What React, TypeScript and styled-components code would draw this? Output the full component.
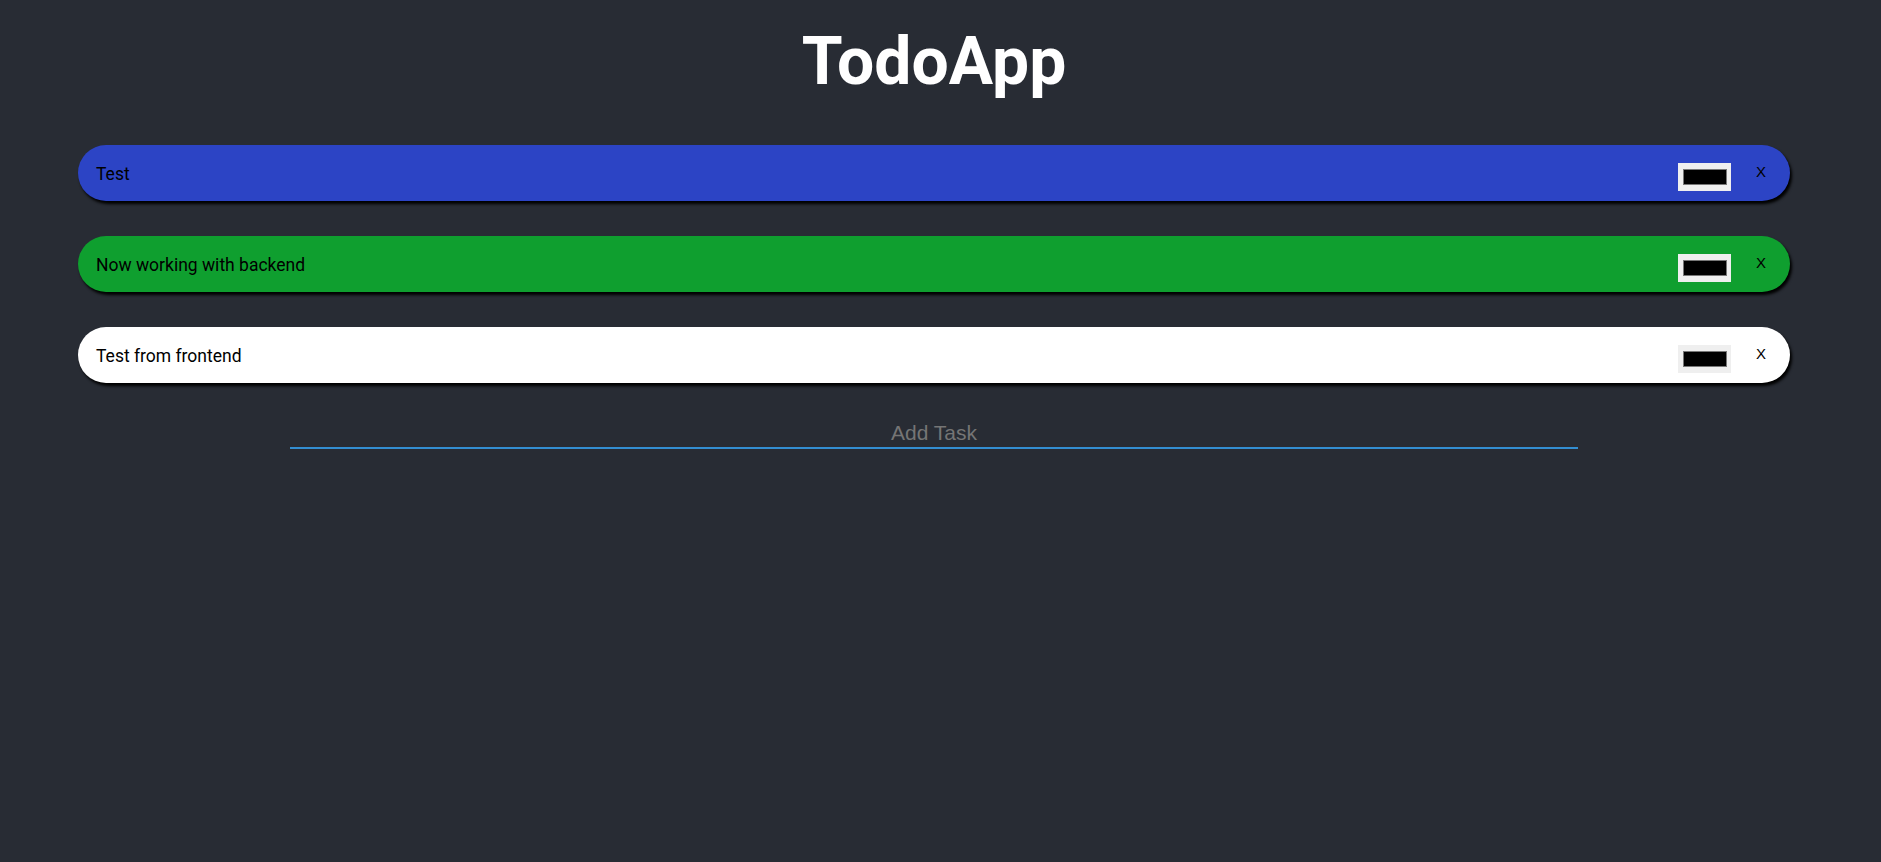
import React, { useState } from "react";
import styled, { createGlobalStyle } from "styled-components";

const GlobalStyle = createGlobalStyle`
  html, body {
    margin: 0;
    padding: 0;
    background: #282c34;
  }
  body {
    font-family: Roboto, "Noto Sans", sans-serif;
  }
`;

const Page = styled.div`
  width: 1868px;
  display: flex;
  flex-direction: column;
  align-items: center;
`;

const Title = styled.h1`
  margin: 22px 0 0;
  height: 80px;
  line-height: 80px;
  font-family: Roboto, sans-serif;
  font-weight: 700;
  font-size: 66px;
  color: #ffffff;
`;

const List = styled.ul`
  list-style: none;
  margin: 43px 0 0;
  padding: 0;
  width: 1712px;
  display: flex;
  flex-direction: column;
  gap: 35px;
`;

const Row = styled.li<{ $bg: string }>`
  height: 56px;
  box-sizing: border-box;
  padding: 0 18px 0 18px;
  display: flex;
  align-items: center;
  background: ${(p) => p.$bg};
  border-radius: 28px;
  box-shadow: 2px 3px 3px #000;
`;

const Label = styled.span`
  flex: 1;
  padding-top: 2px;
  font-family: Roboto, sans-serif;
  font-size: 17.5px;
  color: #000;
`;

const ColorPick = styled.input`
  width: 53px;
  height: 28px;
  box-sizing: border-box;
  margin: 7px 0 0;
  border: none;
  background: #efefef;
  padding: 6px 4px 6px 5px;
  cursor: pointer;
  &::-webkit-color-swatch-wrapper {
    padding: 0;
  }
  &::-webkit-color-swatch {
    border: 1px solid #777;
    border-radius: 0;
  }
`;

const RemoveButton = styled.button`
  margin-left: 19px;
  margin-top: -3px;
  padding: 0 6px;
  border: none;
  background: transparent;
  font-family: "Liberation Sans", Arial, sans-serif;
  font-size: 15px;
  color: #000;
  cursor: pointer;
`;

const AddInput = styled.input`
  margin-top: 32px;
  width: 1288px;
  height: 34px;
  box-sizing: border-box;
  border: none;
  border-bottom: 2px solid #338ed1;
  background: transparent;
  outline: none;
  text-align: center;
  font-family: "Liberation Sans", Arial, sans-serif;
  font-size: 21px;
  color: #ddd;
  padding: 4px 0 0;
  &::placeholder {
    color: #757575;
  }
`;

type Todo = { id: number; text: string; bg: string };

export default function App() {
  const [todos, setTodos] = useState<Todo[]>([
    { id: 1, text: "Test", bg: "#2c44c5" },
    { id: 2, text: "Now working with backend", bg: "#0f9f2f" },
    { id: 3, text: "Test from frontend", bg: "#ffffff" },
  ]);
  const [value, setValue] = useState("");

  return (
    <Page>
      <GlobalStyle />
      <Title>TodoApp</Title>
      <List>
        {todos.map((t) => (
          <Row key={t.id} $bg={t.bg}>
            <Label>{t.text}</Label>
            <ColorPick type="color" defaultValue="#000000" />
            <RemoveButton onClick={() => setTodos(todos.filter((x) => x.id !== t.id))}>
              X
            </RemoveButton>
          </Row>
        ))}
      </List>
      <AddInput
        placeholder="Add Task"
        value={value}
        onChange={(e) => setValue(e.target.value)}
      />
    </Page>
  );
}
